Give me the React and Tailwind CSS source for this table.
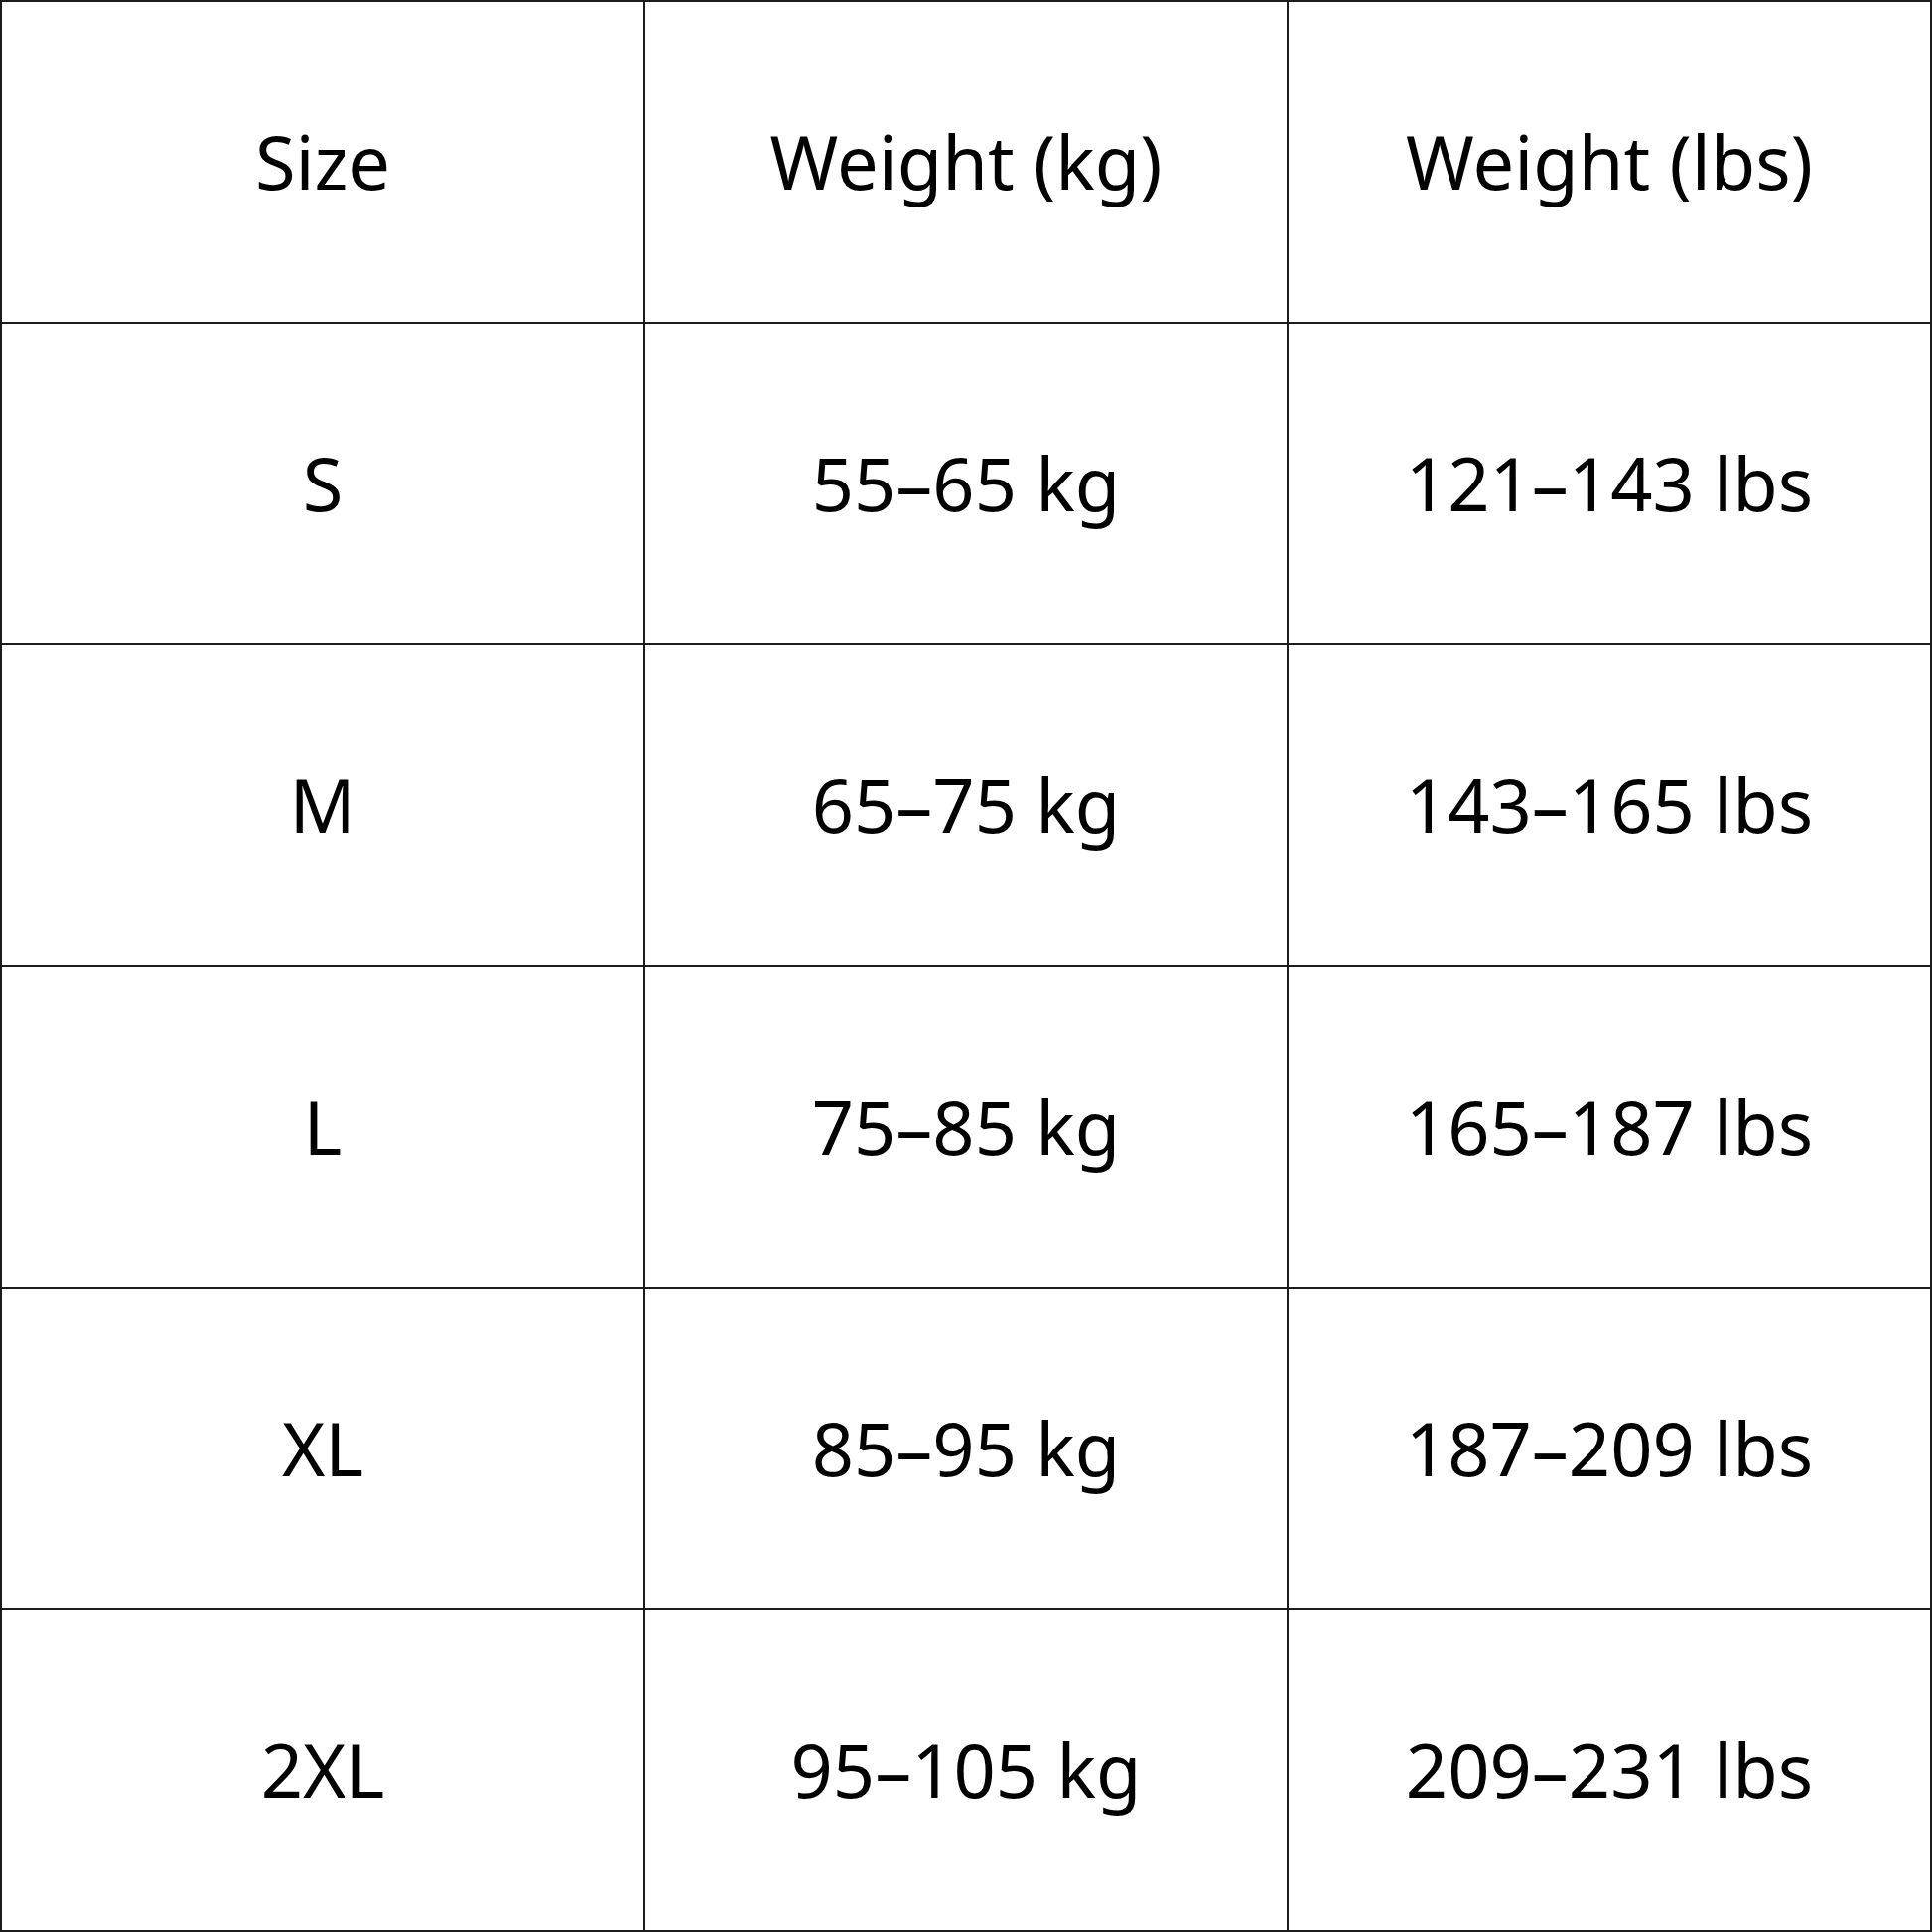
import React from 'react';

const rows = [
  ['Size', 'Weight (kg)', 'Weight (lbs)'],
  ['S', '55–65 kg', '121–143 lbs'],
  ['M', '65–75 kg', '143–165 lbs'],
  ['L', '75–85 kg', '165–187 lbs'],
  ['XL', '85–95 kg', '187–209 lbs'],
  ['2XL', '95–105 kg', '209–231 lbs'],
];

const App = () => {
  return (
    <div className="w-[1946px] h-[1946px] bg-white grid grid-cols-3 grid-rows-6 border-l-2 border-t-2 border-[#1c1c1c] font-['Noto_Sans',sans-serif] text-black">
      {rows.flat().map((text, i) => (
        <div
          key={i}
          className="flex items-center justify-center border-r-2 border-b-2 border-[#1c1c1c] text-[74px] leading-none"
        >
          {text}
        </div>
      ))}
    </div>
  );
};

export default App;
